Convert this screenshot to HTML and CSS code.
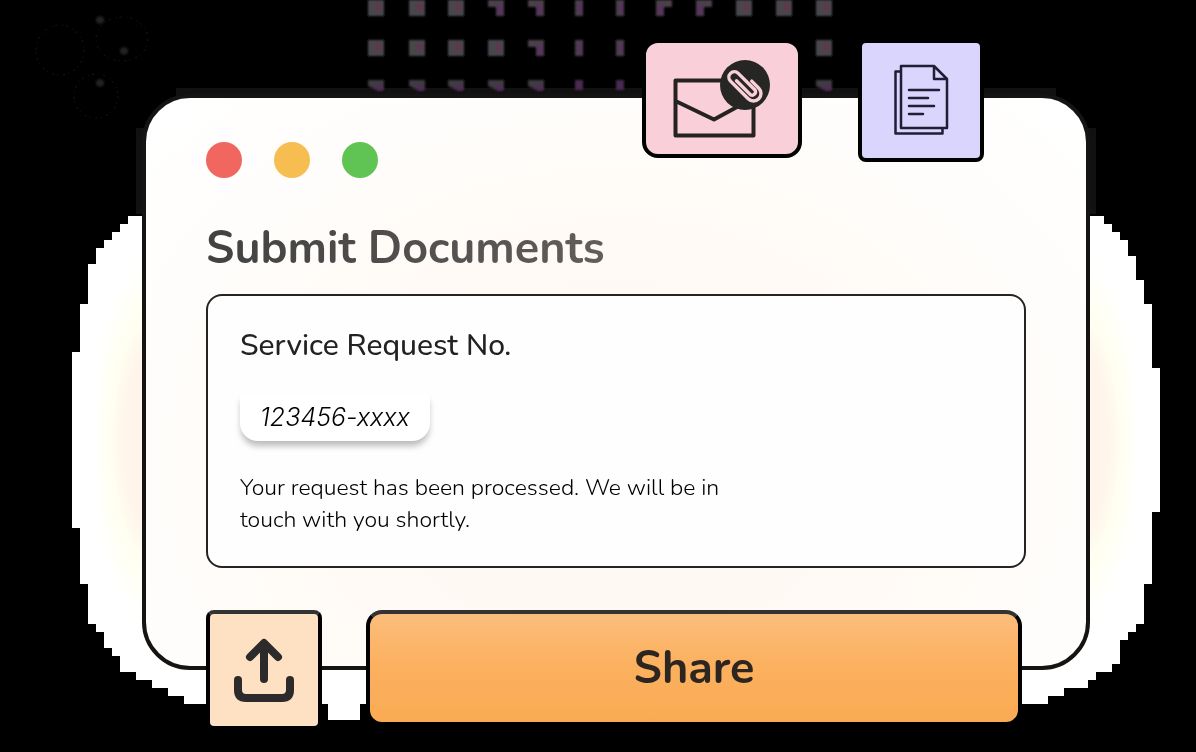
FILE: index.html
```
<!DOCTYPE html>
<html lang="en">
<head>
<meta charset="utf-8">
<meta name="viewport" content="width=device-width, initial-scale=1">
<title>Submit Documents</title>
<link rel="stylesheet" href="styles.css">
</head>
<body>
<main class="stage">
  <svg class="backdrop" viewBox="0 0 1196 752" preserveAspectRatio="none" aria-hidden="true">
    <defs>
      <radialGradient id="glow">
        <stop offset="0.35" stop-color="#fff5ea"/>
        <stop offset="0.47" stop-color="#fff8ed"/>
        <stop offset="0.55" stop-color="#fffeef"/>
        <stop offset="0.68" stop-color="#fffff6"/>
        <stop offset="0.85" stop-color="#ffffff"/>
      </radialGradient>
      <g id="dot"><rect width="16" height="16" fill="#4a464b"/><rect x="8" y="3" width="5" height="8" fill="#60364f"/></g>
      <g id="corner"><path d="M0 0h16v16h-8v-9h-8z" fill="#48404a"/><path d="M9 5h5v10h-5z" fill="#5a3260"/></g>
      <g id="bar"><path d="M0 0h8v16h-8z" fill="#48404a"/><path d="M3 3h4v10h-4z" fill="#5a3260"/></g>
      <g id="low"><path d="M0 0h16v10h-8l-8-4z" fill="#3f3a42"/><path d="M6 7h9v4h-6z" fill="#54265c"/></g>
      <filter id="soft" x="-20%" y="-20%" width="140%" height="140%"><feGaussianBlur stdDeviation="1"/></filter>
    </defs>
    <path fill="#fff" d="M144 216H128V224H120V232H112V240H104V248H96V264H88V304H80V352H72V528H80V584H88V624H96V632H104V648H112V656H120V672H136V680H152V688H168V696H184V704H328V720H360V704H1048V696H1064V688H1088V680H1096V672H1112V664H1120V640H1128V632H1136V624H1144V584H1152V512H1160V368H1152V304H1144V280H1136V256H1128V240H1120V232H1112V224H1104V216Z"/>
    <ellipse cx="150" cy="440" rx="68" ry="215" fill="url(#glow)"/>
    <ellipse cx="1082" cy="440" rx="68" ry="215" fill="url(#glow)"/>
    <g filter="url(#soft)">
      <use href="#dot" x="368" y="0"/><use href="#dot" x="409" y="0"/><use href="#dot" x="448" y="0"/>
      <use href="#corner" x="488" y="0"/><use href="#corner" x="528" y="0"/><use href="#bar" x="575" y="0"/><use href="#bar" x="616" y="0"/>
      <use href="#corner" transform="translate(672 0) scale(-1 1)"/><use href="#corner" transform="translate(712 0) scale(-1 1)"/>
      <use href="#dot" x="736" y="0"/><use href="#dot" x="776" y="0"/><use href="#dot" x="816" y="0"/>
      <use href="#dot" x="368" y="40"/><use href="#dot" x="409" y="40"/><use href="#dot" x="448" y="40"/><use href="#dot" x="488" y="40"/>
      <use href="#corner" x="528" y="40"/><use href="#bar" x="575" y="40"/><use href="#bar" x="616" y="40"/><use href="#dot" x="816" y="40"/>
    </g>
    <path fill="#111" d="M176 88H1056V98H176ZM136 128H146V214H136ZM1086 128H1096V214H1086Z"/>
    <g filter="url(#soft)">
      <use href="#low" x="368" y="80"/><use href="#low" x="409" y="80"/><use href="#low" x="448" y="80"/><use href="#low" x="488" y="80"/>
      <use href="#low" x="528" y="80"/><path d="M575 80h8v10h-8zM616 80h8v10h-8z" fill="#4a2a52"/><use href="#low" x="816" y="80"/>
      <g fill="#242424"><circle cx="100" cy="20" r="4"/><circle cx="124" cy="51" r="4"/><circle cx="100" cy="83" r="4"/></g>
    </g>
    <g fill="none" stroke="#1c1c1c" stroke-width="1" stroke-dasharray="2 5 1 3">
      <ellipse cx="60" cy="50" rx="24" ry="25"/><ellipse cx="122" cy="39" rx="26" ry="22"/><ellipse cx="96" cy="96" rx="22" ry="22"/>
    </g>
  </svg>

  <section class="window">
    <div class="lights" aria-hidden="true">
      <span class="light red"></span><span class="light amber"></span><span class="light green"></span>
    </div>
    <h1 class="title">Submit Documents</h1>
    <div class="card">
      <h2 class="label">Service Request No.</h2>
      <div class="number">123456-xxxx</div>
      <p class="message">Your request has been processed. We will be in touch with you shortly.</p>
    </div>
    <div class="actions">
      <button class="upload" type="button" aria-label="Upload">
        <svg width="60" height="64" viewBox="0 0 60 64" fill="none" stroke="#2c2a2b" stroke-width="8" stroke-linecap="round" stroke-linejoin="round" aria-hidden="true">
          <path d="M30 41V6M16 19 30 5 44 19M4 42V52Q4 60 12 60H48Q56 60 56 52V42"/>
        </svg>
      </button>
      <button class="share" type="button">Share</button>
    </div>
  </section>

  <div class="tiles">
    <div class="tile mail">
      <svg width="100" height="80" viewBox="0 0 100 80" fill="none" aria-hidden="true">
        <path d="M4.500 20.500H82.500V75.500H4.500ZM4.500 41 43 59.500 82.500 38" stroke="#262223" stroke-width="4" stroke-linejoin="round"/>
        <circle cx="74" cy="25" r="25" fill="#262725"/>
        <path transform="translate(74 25) rotate(45)" d="M2 -7.500H12A7.500 7.500 0 0 1 12 7.500H-13A5.500 5.500 0 0 1 -13 -3.500H11A3.500 3.500 0 0 1 11 3H-9" stroke="#f9d0d9" stroke-width="3.400" stroke-linecap="round"/>
      </svg>
    </div>
    <div class="tile docs">
      <svg width="56" height="72" viewBox="0 0 56 72" fill="none" stroke="#201d35" stroke-width="2.500" stroke-linejoin="round" stroke-linecap="round" aria-hidden="true">
        <path d="M8 2H41L54 15V64H8ZM41 2V15H54M8 7.500H2.500V69.500H49.500V65M16 26H46M16 34H35M16 42H41M16 50H30"/>
      </svg>
    </div>
  </div>
</main>
</body>
</html>
```
FILE: styles.css
```
* { box-sizing: border-box; }

body {
  margin: 0;
  background: #000;
  color: #222;
  font-family: Nunito, "Open Sans", "Noto Sans", sans-serif;
}

.stage {
  position: relative;
  min-height: 100vh;
  padding: 94px 106px 80px 142px;
}

.backdrop {
  position: absolute;
  inset: 0;
  width: 100%;
  height: 100%;
}

.window {
  position: relative;
  padding: 44px 60px 0;
  border: 4px solid #151413;
  border-radius: 48px;
  background: radial-gradient(ellipse at 50% 65%, #fff8f2 0%, #fffaf5 45%, #fffdfb 70%, #fff 100%);
}

.lights {
  display: flex;
  gap: 32px;
}

.light {
  width: 36px;
  height: 36px;
  border-radius: 50%;
}

.red { background: #ef675f; }
.amber { background: #f6be50; }
.green { background: #5fc454; }

.title {
  margin: 41px 0 15px;
  font-size: 45px;
  line-height: 60px;
  font-weight: 700;
  color: transparent;
  background: linear-gradient(100deg, #414141, #686461 60%);
  background-clip: text;
  -webkit-background-clip: text;
}

.card {
  padding: 30px 32px;
  border: 2px solid #262322;
  border-radius: 16px;
  background: #fefefe;
}

.label {
  margin: 0 0 28px;
  font-size: 30px;
  line-height: 40px;
  font-weight: 500;
}

.number {
  width: fit-content;
  padding: 0 20px;
  border-radius: 0 0 18px 18px;
  background: #fff;
  box-shadow: 0 6px 6px -1px #bbb;
  color: #000;
  font-family: Inter, sans-serif;
  font-size: 25px;
  line-height: 47px;
  font-style: italic;
  font-weight: 300;
}

.message {
  max-width: 500px;
  margin: 31px 0 0;
  color: #000;
  font-size: 23px;
  line-height: 32px;
  font-weight: 300;
}

.actions {
  display: flex;
  align-items: flex-start;
  gap: 44px;
  margin: 42px 4px -64px 0;
}

.upload,
.share {
  height: 116px;
  border: 4px solid #000;
  border-top-color: #333;
  cursor: pointer;
}

.upload {
  display: grid;
  place-items: center;
  flex: 0 0 116px;
  height: 120px;
  padding: 0;
  border-radius: 8px;
  background: #fee1c2;
}

.share {
  flex: 1;
  padding: 0;
  border-radius: 16px;
  background: linear-gradient(#fcbd7c, #fbb160 45%, #faaa52);
  color: #2d2520;
  font: inherit;
  font-size: 45px;
  font-weight: 700;
}

.tiles {
  position: absolute;
  top: 39px;
  right: 212px;
  display: flex;
  align-items: flex-start;
  gap: 56px;
}

.tile {
  display: grid;
  border: 4px solid #000;
}

.mail {
  width: 160px;
  height: 119px;
  padding: 17px 0 0 25px;
  border-radius: 16px;
  background: #f9d0d9;
}

.docs {
  width: 126px;
  height: 123px;
  padding: 21px 0 0 31px;
  border-radius: 8px;
  background: #d9d5fd;
}
```
